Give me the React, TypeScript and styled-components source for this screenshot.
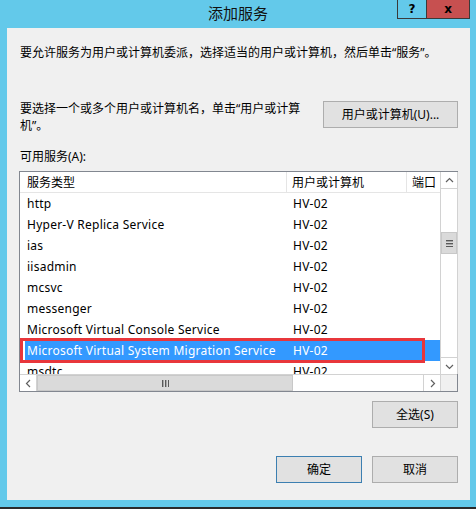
import React from "react";
import styled, { createGlobalStyle } from "styled-components";

const GlobalStyle = createGlobalStyle`
  html, body {
    margin: 0;
    padding: 0;
    background: #63c9ea;
  }
  body {
    font-family: "Noto Sans", "Noto Sans CJK SC", sans-serif;
    font-size: 12px;
    color: #000;
  }
`;

const Window = styled.div`
  width: 476px;
  height: 509px;
  box-sizing: border-box;
  background: #63c9ea;
  border-bottom: 2px solid #2b2b2b;
  display: flex;
  flex-direction: column;
  overflow: hidden;
`;

const TitleBar = styled.div`
  height: 28px;
  display: grid;
  grid-template-columns: 1fr auto 1fr;
  align-items: start;
`;

const Title = styled.div`
  grid-column: 2;
  font-family: "Noto Sans CJK SC", sans-serif;
  font-size: 15px;
  line-height: 26px;
  color: #111;
`;

const CaptionButtons = styled.div`
  grid-column: 3;
  justify-self: end;
  display: flex;
  margin-right: 6px;
`;

const CaptionButton = styled.div<{ $close?: boolean; $w: number }>`
  width: ${(p) => p.$w}px;
  height: 19px;
  box-sizing: border-box;
  border: 1px solid #3a3a3a;
  border-top: none;
  border-left-width: ${(p) => (p.$close ? 0 : 1)}px;
  background: ${(p) => (p.$close ? "#c75050" : "transparent")};
  display: flex;
  align-items: center;
  justify-content: center;
  font-family: "DejaVu Sans", sans-serif;
  font-weight: bold;
  font-size: 12px;
  color: #000;
`;

const Client = styled.div`
  margin: 0 6px 0 7px;
  height: 472px;
  background: #f0f0f0;
  box-sizing: border-box;
  padding: 17px 12px 0 13px;
  display: flex;
  flex-direction: column;
`;

const Text = styled.div<{ $top?: number }>`
  line-height: 16px;
  margin-top: ${(p) => p.$top ?? 0}px;
`;

const PickRow = styled.div`
  margin-top: 39px;
  display: flex;
  justify-content: space-between;
  align-items: flex-start;
`;

const PickText = styled.div`
  max-width: 292px;
  line-height: 17px;
`;

const Button = styled.div<{ $default?: boolean; $w: number; $top?: number }>`
  width: ${(p) => p.$w}px;
  height: 27px;
  margin-top: ${(p) => p.$top ?? 0}px;
  box-sizing: border-box;
  background: #e1e1e1;
  border: 1px solid ${(p) => (p.$default ? "#3c7fb1" : "#adadad")};
  display: flex;
  align-items: center;
  justify-content: center;
  line-height: 1;
`;

const ListBox = styled.div`
  position: relative;
  margin: 6px 0 0 -1px;
  width: 439px;
  height: 221px;
  box-sizing: border-box;
  border: 1px solid #828790;
  background: #fff;
  display: grid;
  grid-template-columns: 1fr 17px;
  grid-template-rows: 1fr 17px;
`;

const Viewport = styled.div`
  overflow: hidden;
  white-space: nowrap;
`;

const cols = "267px 120px 60px";

const HeaderRow = styled.div`
  display: grid;
  grid-template-columns: ${cols};
  height: 21px;
  box-sizing: border-box;
  border-bottom: 1px solid #e5e5e5;
  line-height: 20px;
  font-family: "Noto Sans CJK SC", sans-serif;
`;

const HeaderCell = styled.div<{ $pad: number }>`
  padding-left: ${(p) => p.$pad}px;
  border-right: 1px solid #e5e5e5;
  box-shadow: inset 1px 0 0 #fff;
`;

const Row = styled.div<{ $selected?: boolean }>`
  display: grid;
  grid-template-columns: ${cols};
  height: 21px;
  line-height: 21px;
  letter-spacing: 0.25px;
  background: ${(p) => (p.$selected ? "#3399ff" : "transparent")};
  color: ${(p) => (p.$selected ? "#fff" : "#000")};
  box-shadow: ${(p) => (p.$selected ? "inset 5px 0 0 #fff" : "none")};
`;

const Cell = styled.div<{ $pad: number }>`
  padding-left: ${(p) => p.$pad}px;
`;

const VScroll = styled.div`
  display: flex;
  flex-direction: column;
  border-left: 1px solid #d2d2d2;
  border-right: 1px solid #d2d2d2;
  margin-right: -1px;
`;

const HScroll = styled.div`
  display: flex;
  border-top: 1px solid #d2d2d2;
`;

const Arrow = styled.div<{ $horizontal?: boolean }>`
  flex: none;
  width: ${(p) => (p.$horizontal ? "17px" : "auto")};
  height: ${(p) => (p.$horizontal ? "auto" : "17px")};
  box-sizing: border-box;
  display: flex;
  align-items: center;
  justify-content: center;
  background: #fff;
  border: 0 solid #d2d2d2;
`;

const UpArrow = styled(Arrow)`
  border-bottom-width: 1px;
`;
const DownArrow = styled(Arrow)`
  border-top-width: 1px;
`;
const LeftArrow = styled(Arrow)`
  border-right-width: 1px;
`;
const RightArrow = styled(Arrow)`
  border-left-width: 1px;
`;

const Track = styled.div<{ $horizontal?: boolean }>`
  flex: 1;
  display: flex;
  flex-direction: ${(p) => (p.$horizontal ? "row" : "column")};
`;

const Thumb = styled.div`
  flex: none;
  box-sizing: border-box;
  background: #dadada;
  border: 1px solid #c8c8c8;
  display: flex;
  align-items: center;
  justify-content: center;
`;

const Corner = styled.div`
  background: #f0f0f0;
  border-top: 1px solid #d2d2d2;
  border-left: 1px solid #d2d2d2;
`;

const Highlight = styled.div`
  position: absolute;
  left: 0;
  top: 166px;
  width: 405px;
  height: 25px;
  box-sizing: border-box;
  border: 3px solid #e8363b;
  pointer-events: none;
`;

const ButtonRow = styled.div<{ $top: number }>`
  margin-top: ${(p) => p.$top}px;
  display: flex;
  justify-content: flex-end;
  gap: 10px;
`;

function Chevron({ dir }: { dir: "up" | "down" | "left" | "right" }) {
  const rot = { up: 0, right: 90, down: 180, left: 270 }[dir];
  return (
    <svg width="9" height="9" viewBox="0 0 9 9">
      <path
        d="M1 6 L4.5 2.5 L8 6"
        fill="none"
        stroke="#606060"
        strokeWidth="1.2"
        transform={`rotate(${rot} 4.5 4.5)`}
      />
    </svg>
  );
}

function Grip({ horizontal }: { horizontal?: boolean }) {
  const bars = [0, 3, 6];
  return (
    <svg width="7" height="7" viewBox="0 0 7 7">
      {bars.map((b) =>
        horizontal ? (
          <rect key={b} x={b} y={0} width={1.4} height={7} fill="#5a5a5a" />
        ) : (
          <rect key={b} x={0} y={b} width={7} height={1.4} fill="#5a5a5a" />
        )
      )}
    </svg>
  );
}

const services = [
  "http",
  "Hyper-V Replica Service",
  "ias",
  "iisadmin",
  "mcsvc",
  "messenger",
  "Microsoft Virtual Console Service",
  "Microsoft Virtual System Migration Service",
  "msdtc",
];

const selected = "Microsoft Virtual System Migration Service";

export default function App() {
  return (
    <>
      <GlobalStyle />
      <Window>
        <TitleBar>
          <Title>添加服务</Title>
          <CaptionButtons>
            <CaptionButton $w={30}>?</CaptionButton>
            <CaptionButton $w={43} $close>
              x
            </CaptionButton>
          </CaptionButtons>
        </TitleBar>
        <Client>
          <Text>要允许服务为用户或计算机委派，选择适当的用户或计算机，然后单击“服务”。</Text>
          <PickRow>
            <PickText>要选择一个或多个用户或计算机名，单击“用户或计算机”。</PickText>
            <Button $w={135} $top={1}>
              用户或计算机(U)...
            </Button>
          </PickRow>
          <Text $top={15}>可用服务(A):</Text>
          <ListBox>
            <Viewport>
              <HeaderRow>
                <HeaderCell $pad={7}>服务类型</HeaderCell>
                <HeaderCell $pad={5}>用户或计算机</HeaderCell>
                <HeaderCell $pad={5}>端口</HeaderCell>
              </HeaderRow>
              {services.map((s) => (
                <Row key={s} $selected={s === selected}>
                  <Cell $pad={7}>{s}</Cell>
                  <Cell $pad={6}>HV-02</Cell>
                  <Cell $pad={6}></Cell>
                </Row>
              ))}
            </Viewport>
            <VScroll>
              <UpArrow>
                <Chevron dir="up" />
              </UpArrow>
              <Track>
                <Thumb style={{ marginTop: 43, height: 22 }}>
                  <Grip />
                </Thumb>
              </Track>
              <DownArrow>
                <Chevron dir="down" />
              </DownArrow>
            </VScroll>
            <HScroll>
              <LeftArrow $horizontal>
                <Chevron dir="left" />
              </LeftArrow>
              <Track $horizontal>
                <Thumb style={{ width: 256 }}>
                  <Grip horizontal />
                </Thumb>
              </Track>
              <RightArrow $horizontal>
                <Chevron dir="right" />
              </RightArrow>
            </HScroll>
            <Corner />
            <Highlight />
          </ListBox>
          <ButtonRow $top={9}>
            <Button $w={86}>全选(S)</Button>
          </ButtonRow>
          <ButtonRow $top={28}>
            <Button $w={86} $default>
              确定
            </Button>
            <Button $w={86}>取消</Button>
          </ButtonRow>
        </Client>
      </Window>
    </>
  );
}
